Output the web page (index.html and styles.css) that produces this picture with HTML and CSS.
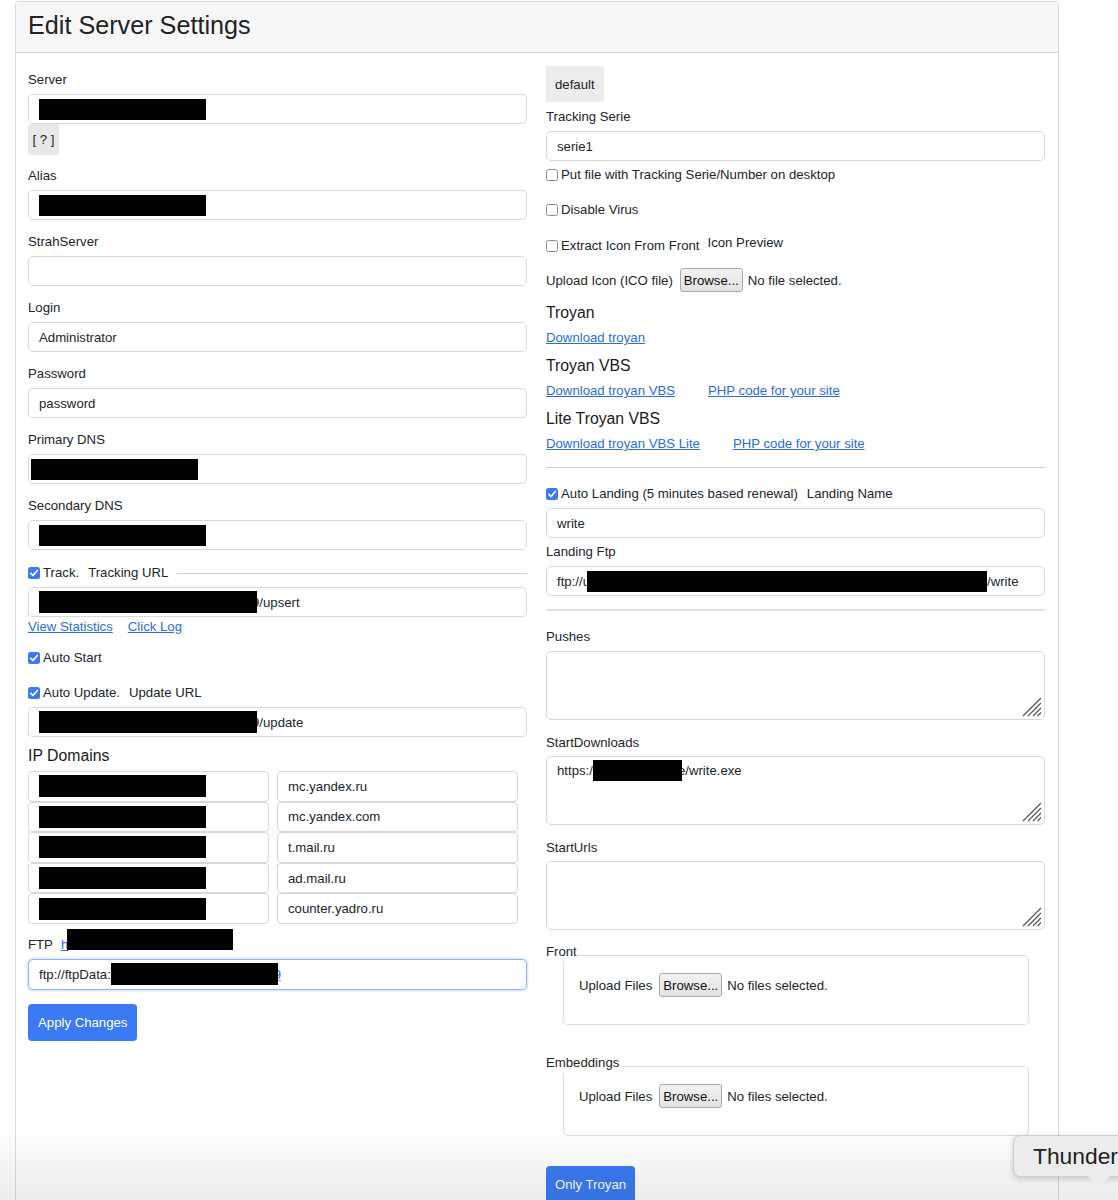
FILE: index.html
```html
<!DOCTYPE html>
<html>
<head>
<meta charset="utf-8">
<title>Edit Server Settings</title>
<link rel="stylesheet" href="styles.css">
</head>
<body>
<div class="page">
  <div class="card">
    <div class="card-header">Edit Server Settings</div>
    <div class="card-body">
      <div class="col col-left">
        <div class="group g-server">
          <div class="label">Server</div>
          <div class="field"><span class="redact r-std"></span></div>
          <button class="qbtn">[ ? ]</button>
        </div>
        <div class="group">
          <div class="label">Alias</div>
          <div class="field"><span class="redact r-std"></span></div>
        </div>
        <div class="group">
          <div class="label">StrahServer</div>
          <div class="field"></div>
        </div>
        <div class="group">
          <div class="label">Login</div>
          <div class="field">Administrator</div>
        </div>
        <div class="group">
          <div class="label">Password</div>
          <div class="field">password</div>
        </div>
        <div class="group">
          <div class="label">Primary DNS</div>
          <div class="field field-tight"><span class="redact r-std"></span></div>
        </div>
        <div class="group g-last">
          <div class="label">Secondary DNS</div>
          <div class="field"><span class="redact r-std"></span></div>
        </div>

        <div class="check-row track-row">
          <svg class="chk" width="12" height="12" viewBox="0 0 12 12"><rect width="12" height="12" rx="2.5" fill="#3a7bf3"/><path d="M2.8 6.3 L5 8.5 L9.3 3.5" stroke="#fff" stroke-width="1.7" fill="none" stroke-linecap="round" stroke-linejoin="round"/></svg>
          <span>Track.</span><span class="sub-label">Tracking URL</span><span class="rule-fill"></span>
        </div>
        <div class="field"><span class="redact r-url"></span><span class="after-redact">9/upsert</span></div>
        <div class="links-row">
          <a href="#">View Statistics</a><a href="#">Click Log</a>
        </div>
        <div class="check-row cr-autostart">
          <svg class="chk" width="12" height="12" viewBox="0 0 12 12"><rect width="12" height="12" rx="2.5" fill="#3a7bf3"/><path d="M2.8 6.3 L5 8.5 L9.3 3.5" stroke="#fff" stroke-width="1.7" fill="none" stroke-linecap="round" stroke-linejoin="round"/></svg>
          <span>Auto Start</span>
        </div>
        <div class="check-row cr-autoupdate">
          <svg class="chk" width="12" height="12" viewBox="0 0 12 12"><rect width="12" height="12" rx="2.5" fill="#3a7bf3"/><path d="M2.8 6.3 L5 8.5 L9.3 3.5" stroke="#fff" stroke-width="1.7" fill="none" stroke-linecap="round" stroke-linejoin="round"/></svg>
          <span>Auto Update.</span><span class="sub-label">Update URL</span>
        </div>
        <div class="field"><span class="redact r-url"></span><span class="after-redact">9/update</span></div>

        <div class="section-title ip-title">IP Domains</div>
        <div class="ip-grid">
          <div class="ip-cell"><span class="redact r-ip"></span></div><div class="ip-cell">mc.yandex.ru</div>
          <div class="ip-cell"><span class="redact r-ip"></span></div><div class="ip-cell">mc.yandex.com</div>
          <div class="ip-cell"><span class="redact r-ip"></span></div><div class="ip-cell">t.mail.ru</div>
          <div class="ip-cell"><span class="redact r-ip"></span></div><div class="ip-cell">ad.mail.ru</div>
          <div class="ip-cell"><span class="redact r-ip"></span></div><div class="ip-cell">counter.yadro.ru</div>
        </div>

        <div class="ftp-row">
          <span class="ftp-label">FTP</span>
          <a href="#" class="ftp-link">h</a>
          <span class="redact r-ftplink"></span>
        </div>
        <div class="field field-focus">ftp://ftpData:<span class="redact r-ftp"></span><span class="sel9">9</span></div>
        <button class="btn-primary btn-apply">Apply Changes</button>
      </div>

      <div class="col col-right">
        <button class="btn-default">default</button>
        <div class="label lbl-serie">Tracking Serie</div>
        <div class="field">serie1</div>
        <div class="check-row cr-putfile">
          <svg class="chk" width="12" height="12" viewBox="0 0 12 12"><rect x="0.5" y="0.5" width="11" height="11" rx="2" fill="#fff" stroke="#8a8a8a"/></svg>
          <span>Put file with Tracking Serie/Number on desktop</span>
        </div>
        <div class="check-row cr-virus">
          <svg class="chk" width="12" height="12" viewBox="0 0 12 12"><rect x="0.5" y="0.5" width="11" height="11" rx="2" fill="#fff" stroke="#8a8a8a"/></svg>
          <span>Disable Virus</span>
        </div>
        <div class="check-row cr-extract">
          <svg class="chk" width="12" height="12" viewBox="0 0 12 12"><rect x="0.5" y="0.5" width="11" height="11" rx="2" fill="#fff" stroke="#8a8a8a"/></svg>
          <span>Extract Icon From Front</span><span class="icon-preview">Icon Preview</span>
        </div>
        <div class="upload-row ur-icon">
          <span>Upload Icon (ICO file)</span>
          <button class="browse">Browse...</button>
          <span class="no-file">No file selected.</span>
        </div>

        <div class="section-title st-troyan">Troyan</div>
        <div class="links-row lr-dl"><a href="#">Download troyan</a></div>
        <div class="section-title st-next">Troyan VBS</div>
        <div class="links-row lr-dl lr-wide"><a href="#">Download troyan VBS</a><a href="#">PHP code for your site</a></div>
        <div class="section-title st-next">Lite Troyan VBS</div>
        <div class="links-row lr-dl lr-wide"><a href="#">Download troyan VBS Lite</a><a href="#">PHP code for your site</a></div>
        <div class="hr hr-1"></div>

        <div class="check-row cr-landing">
          <svg class="chk" width="12" height="12" viewBox="0 0 12 12"><rect width="12" height="12" rx="2.5" fill="#3a7bf3"/><path d="M2.8 6.3 L5 8.5 L9.3 3.5" stroke="#fff" stroke-width="1.7" fill="none" stroke-linecap="round" stroke-linejoin="round"/></svg>
          <span>Auto Landing (5 minutes based renewal)</span><span class="sub-label sl-landing">Landing Name</span>
        </div>
        <div class="field">write</div>
        <div class="label lbl-ftp">Landing Ftp</div>
        <div class="field">ftp://u<span class="redact r-landing"></span><span>/write</span></div>
        <div class="hr hr-2"></div>

        <div class="label lbl-pushes">Pushes</div>
        <div class="textarea">
          <svg class="grip" width="20" height="20" viewBox="0 0 20 20"><path d="M1 19 L19 1 M6 19 L19 6 M11 19 L19 11 M15.5 19 L19 15.5" stroke="#555" stroke-width="1.2" fill="none"/></svg>
        </div>
        <div class="label lbl-ta">StartDownloads</div>
        <div class="textarea">
          <div class="ta-text">https:/<span class="redact r-sd"></span><span class="after-redact-sd">e/write.exe</span></div>
          <svg class="grip" width="20" height="20" viewBox="0 0 20 20"><path d="M1 19 L19 1 M6 19 L19 6 M11 19 L19 11 M15.5 19 L19 15.5" stroke="#555" stroke-width="1.2" fill="none"/></svg>
        </div>
        <div class="label lbl-ta">StartUrls</div>
        <div class="textarea">
          <svg class="grip" width="20" height="20" viewBox="0 0 20 20"><path d="M1 19 L19 1 M6 19 L19 6 M11 19 L19 11 M15.5 19 L19 15.5" stroke="#555" stroke-width="1.2" fill="none"/></svg>
        </div>

        <div class="group-box gb-front">
          <span class="box-label">Front</span>
          <div class="box">
            <div class="upload-row">
              <span>Upload Files</span>
              <button class="browse">Browse...</button>
              <span class="no-file">No files selected.</span>
            </div>
          </div>
        </div>
        <div class="group-box gb-embed">
          <span class="box-label">Embeddings</span>
          <div class="box">
            <div class="upload-row">
              <span>Upload Files</span>
              <button class="browse">Browse...</button>
              <span class="no-file">No files selected.</span>
            </div>
          </div>
        </div>
        <button class="btn-primary btn-only">Only Troyan</button>
      </div>
    </div>
  </div>

  <div class="screen-shade"></div>
  <div class="tooltip">Thunder<span class="tip-arrow"></span></div>
</div>
</body>
</html>
```

FILE: styles.css
```css
* { box-sizing: border-box; }
html, body { margin: 0; padding: 0; background: #fff; }
body {
  font-family: "Liberation Sans", Arial, Helvetica, sans-serif;
  font-size: 13.2px;
  color: #212529;
}
.page {
  position: relative;
  width: 1118px;
  height: 1200px;
  overflow: hidden;
}
.card {
  margin: 1px 0 0 15px;
  width: 1044px;
  border: 1px solid #dcdcdc;
  border-bottom: none;
  border-radius: 4px 4px 0 0;
  min-height: 1300px;
}
.card-header {
  background: #f7f7f7;
  border-bottom: 1px solid #d4d4d4;
  height: 51px;
  padding: 0 12px 4px 12px;
  line-height: 46px;
  font-size: 25.2px;
  color: #1f2326;
}
.card-body {
  display: grid;
  grid-template-columns: 499px 499px;
  column-gap: 19px;
  padding: 13px 12px 0 12px;
  align-items: start;
}
.col { display: flex; flex-direction: column; align-items: stretch; }
.col-left { padding-top: 4px; }

.label { line-height: 20px; margin-bottom: 4px; }
.group { margin-bottom: 12px; }
.g-server { margin-bottom: 11px; }
.g-last { margin-bottom: 13px; }

.field {
  height: 30px;
  border: 1px solid #d8d8d8;
  border-radius: 5px;
  padding: 0 10px;
  display: flex;
  align-items: center;
  white-space: nowrap;
  background: #fff;
}
.field-tight { padding-left: 2px; }
.redact { display: inline-block; background: #000; flex: none; }
.r-std { width: 167px; height: 21px; }
.r-url { width: 218px; height: 22px; position: relative; z-index: 1; margin-right: -5px; }
.r-ip { width: 167px; height: 22px; }
.r-ftp { width: 167px; height: 22px; position: relative; z-index: 1; margin-right: -4px; }
.r-landing { width: 400px; height: 21px; position: relative; z-index: 1; margin-left: -3px; }
.r-sd { width: 89px; height: 21px; position: relative; z-index: 1; margin-right: -4px; }
.r-ftplink { width: 166px; height: 21px; align-self: flex-start; margin-left: -1px; }
.sel9 { text-decoration: underline; text-decoration-color: #7aa7f0; color: #3a63b8; }

.qbtn {
  align-self: flex-start;
  width: 31px;
  height: 31px;
  margin: 0;
  padding: 0;
  border: none;
  border-radius: 2px;
  background: #e8e8e8;
  font: inherit;
  color: #212529;
  white-space: nowrap;
}

.check-row {
  display: flex;
  align-items: center;
  line-height: 20px;
  height: 20px;
  white-space: nowrap;
}
.chk { flex: none; margin-right: 3px; }
.sub-label { margin-left: 9px; }
.sl-landing { margin-left: 9px; }
.track-row { margin-bottom: 4px; }
.rule-fill { flex: 1; height: 1px; background: #cfcfcf; margin-left: 9px; }
.cr-autostart { margin-top: 11px; }
.cr-autoupdate { margin-top: 15px; margin-bottom: 4px; }

a { color: #2a6de0; text-decoration: underline; }
.links-row { display: flex; line-height: 20px; height: 20px; gap: 15px; white-space: nowrap; }
.lr-wide { gap: 33px; }

.section-title { font-size: 15.8px; line-height: 22px; color: #1a1a1a; }
.ip-title { margin-top: 8px; margin-bottom: 4px; }

.ip-grid {
  display: grid;
  grid-template-columns: 241px 241px;
  grid-auto-rows: 30.6px;
  column-gap: 8px;
}
.ip-cell {
  border: 1px solid #d8d8d8;
  border-radius: 4px;
  padding: 0 10px;
  display: flex;
  align-items: center;
  white-space: nowrap;
}

.ftp-row {
  display: flex;
  align-items: flex-end;
  height: 26px;
  margin-top: 5px;
  margin-bottom: 4px;
}
.ftp-label { line-height: 20px; margin-right: 8px; }
.ftp-link { line-height: 20px; }
.field-focus {
  height: 31px;
  border-color: #93b6f3;
  box-shadow: 0 0 0 1.5px rgba(90, 145, 240, 0.2);
}

.btn-primary {
  align-self: flex-start;
  height: 37px;
  border: none;
  border-radius: 4px;
  background: #3a7bf3;
  color: #fff;
  font: inherit;
  margin: 0;
  white-space: nowrap;
}
.btn-apply { margin-top: 14px; padding: 0 10px; }
.btn-only { margin-top: 30px; padding: 0 9px; }

.btn-default {
  align-self: flex-start;
  height: 36px;
  border: none;
  border-radius: 2px;
  background: #ececec;
  font: inherit;
  color: #212529;
  padding: 0 9px;
  margin: 0;
  white-space: nowrap;
}
.lbl-serie { margin-top: 5px; }
.cr-putfile { margin-top: 4px; }
.cr-virus { margin-top: 15px; }
.cr-extract { margin-top: 16px; }
.icon-preview { margin-left: 8px; margin-top: -6px; }

.upload-row {
  display: flex;
  align-items: center;
  height: 24px;
  white-space: nowrap;
}
.ur-icon { margin-top: 12px; }
.browse {
  height: 24px;
  margin: 0 0 0 7px;
  padding: 0 3px;
  border: 1px solid #a9a9a9;
  border-radius: 3px;
  background: linear-gradient(#f2f2f2, #e2e2e2);
  font: inherit;
  color: #111;
  white-space: nowrap;
}
.no-file { margin-left: 5px; }

.st-troyan { margin-top: 10px; }
.st-next { margin-top: 7px; }
.lr-dl { margin-top: 4px; }

.hr-1 { margin-top: 13px; height: 1px; background: #d0d0d0; }
.hr-2 { margin-top: 13px; height: 2px; background: #e1e1e1; }
.cr-landing { margin-top: 16px; margin-bottom: 4px; }
.lbl-ftp { margin-top: 4px; }
.lbl-pushes { margin-top: 16px; margin-bottom: 4px; }
.lbl-ta { margin-top: 13px; margin-bottom: 3px; }

.textarea {
  position: relative;
  height: 69px;
  border: 1px solid #d8d8d8;
  border-radius: 5px;
}
.ta-text {
  display: flex;
  align-items: center;
  padding: 3px 10px 0 10px;
  white-space: nowrap;
}
.grip { position: absolute; right: 2px; bottom: 2px; }

.group-box { display: flex; flex-direction: column; align-items: flex-start; }
.gb-front { margin-top: 12px; }
.gb-embed { margin-top: 28px; }
.box-label {
  position: relative;
  z-index: 1;
  line-height: 20px;
  background: #fff;
  padding-right: 1px;
}
.box {
  margin: -7px 0 0 17px;
  width: 466px;
  height: 70px;
  border: 1px solid #dcdcdc;
  border-radius: 5px;
  padding: 17px 16px 0 15px;
}

.screen-shade {
  position: absolute;
  left: 0;
  right: 0;
  bottom: 0;
  height: 75px;
  background: linear-gradient(rgba(0,0,0,0), rgba(0,0,0,0.075));
  pointer-events: none;
}
.tooltip {
  position: absolute;
  left: 1013px;
  top: 1135px;
  width: 160px;
  height: 42px;
  background: #ececec;
  border: 1px solid rgba(0,0,0,0.12);
  border-radius: 7px;
  box-shadow: 0 2px 6px rgba(0,0,0,0.18);
  font-size: 22.8px;
  line-height: 40px;
  padding-left: 19px;
  color: #1e1e1e;
  white-space: nowrap;
}
.tip-arrow {
  position: absolute;
  left: 74px;
  bottom: -12px;
  width: 0;
  height: 0;
  border-left: 11px solid transparent;
  border-right: 11px solid transparent;
  border-top: 12px solid #ececec;
}
```
